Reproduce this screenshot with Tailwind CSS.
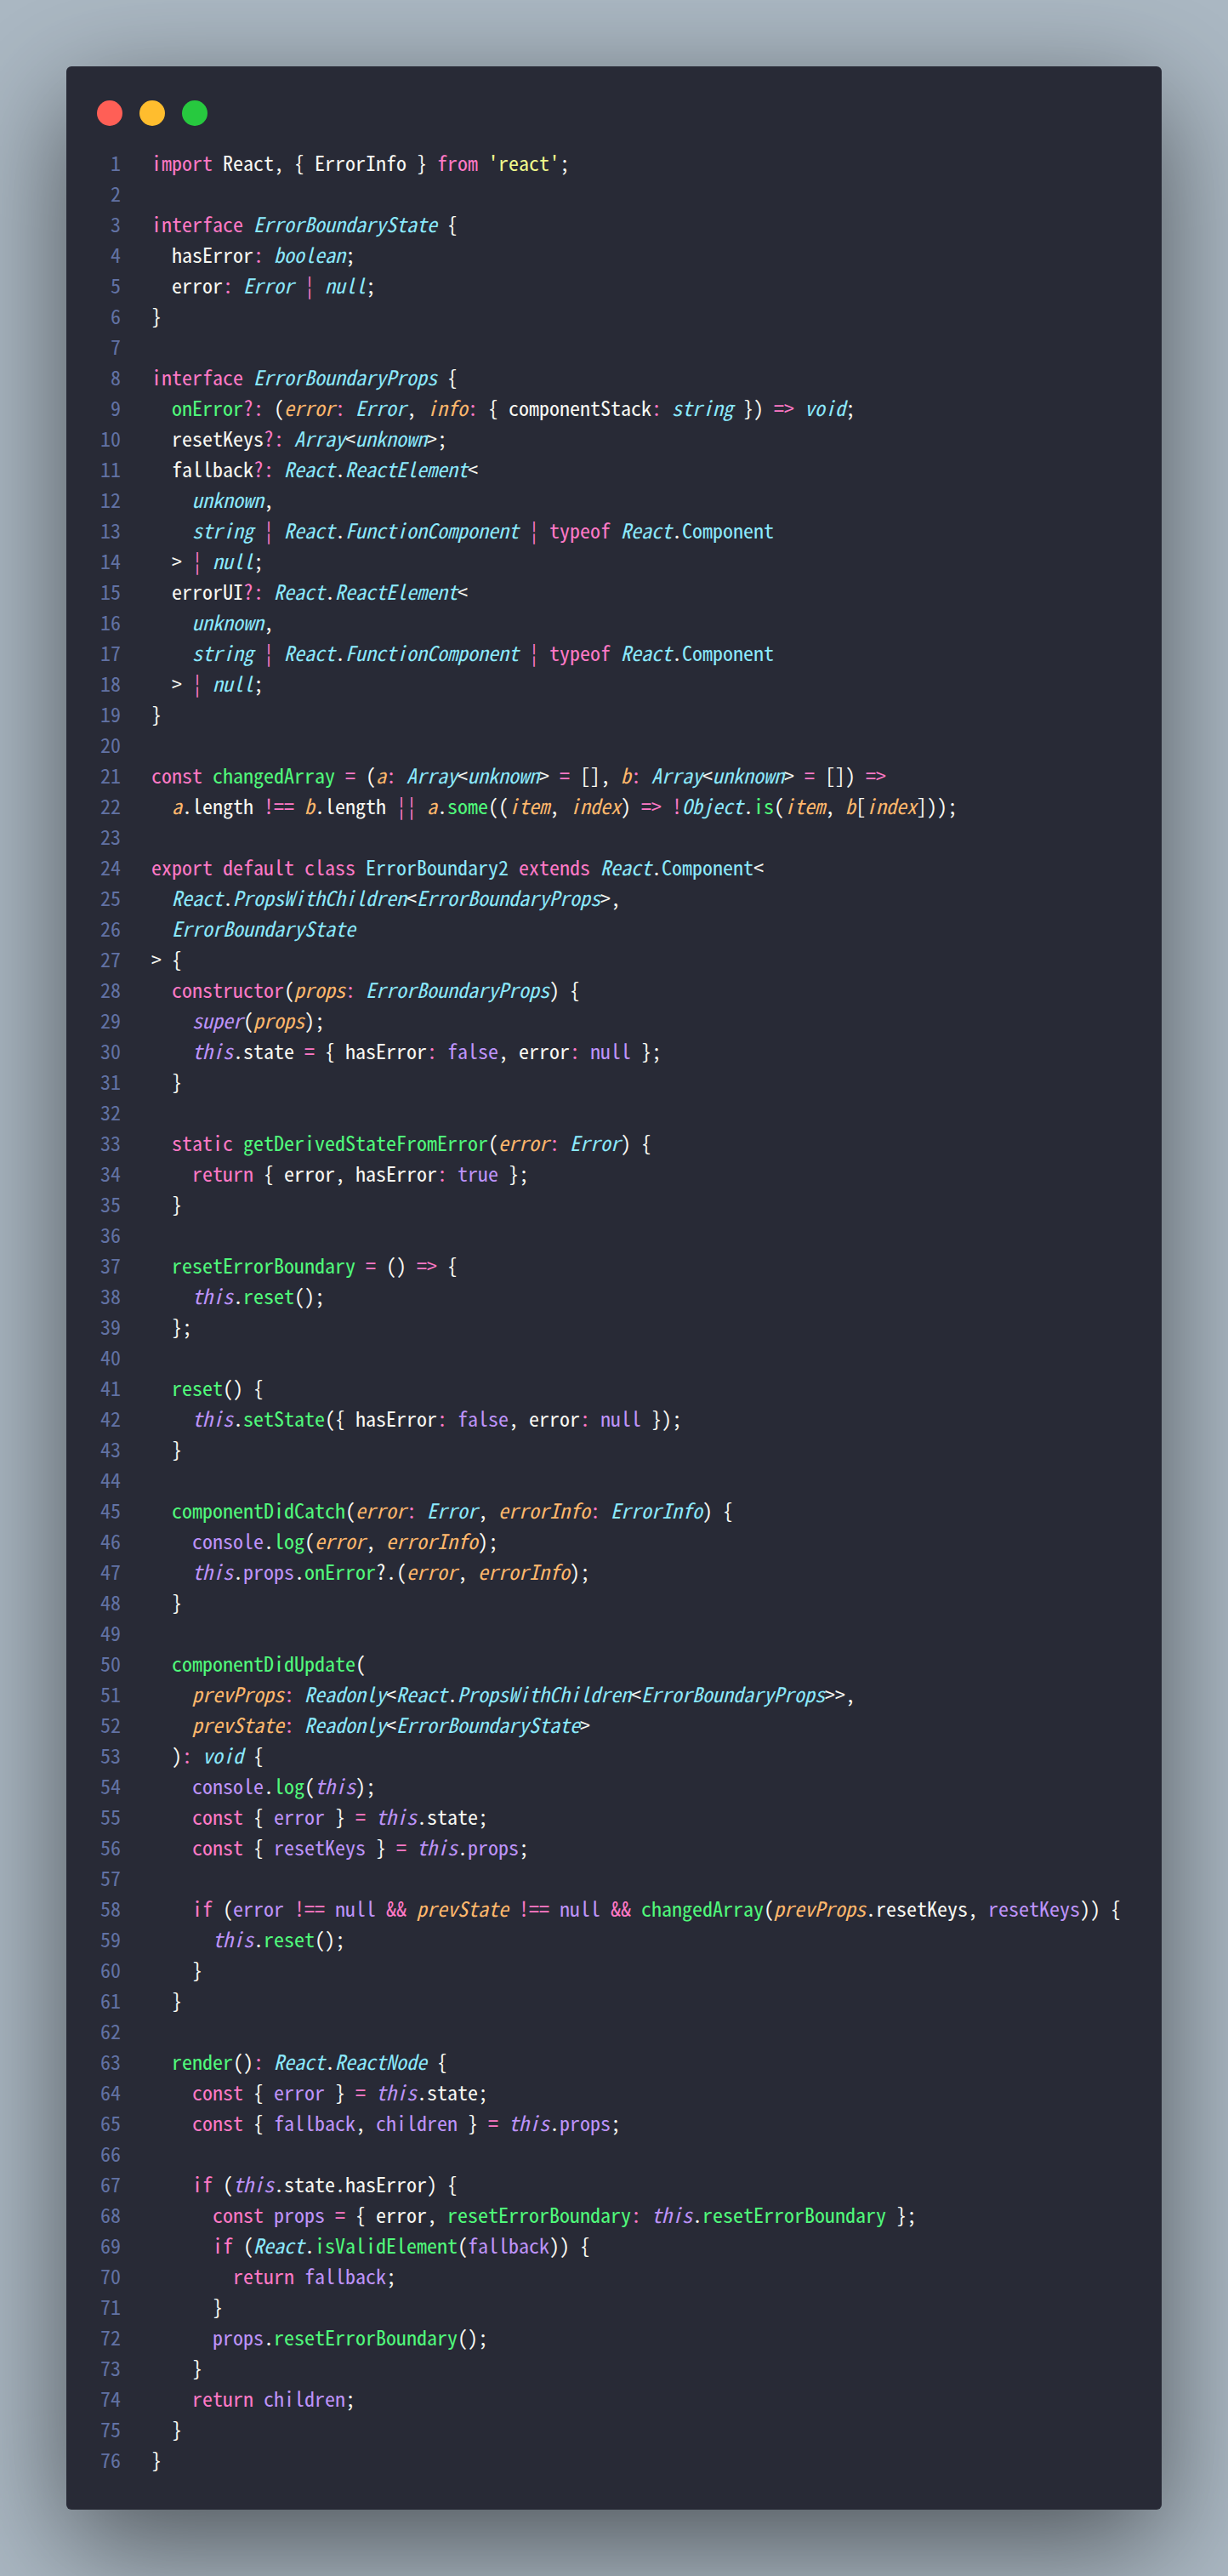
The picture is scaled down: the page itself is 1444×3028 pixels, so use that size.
<!DOCTYPE html>
<html lang="en">
<head>
<meta charset="UTF-8">
<title>ErrorBoundary2</title>
<script src="https://cdn.jsdelivr.net/npm/@tailwindcss/browser@4"></script>
</head>
<body class="bg-[#abb8c3] w-[1444px] h-[3028px] p-[78px]">
<div class="w-[1288px] h-[2872px] bg-[#282a36] rounded-md shadow-[0_40px_136px_rgba(0,0,0,0.55)] pt-10 overflow-hidden">
  <!-- window controls -->
  <div class="flex gap-5 pl-9">
    <div class="w-[30px] h-[30px] rounded-full bg-[#ff5f56]"></div>
    <div class="w-[30px] h-[30px] rounded-full bg-[#ffbd2e]"></div>
    <div class="w-[30px] h-[30px] rounded-full bg-[#27c93f]"></div>
  </div>
  <!-- code -->
  <div class="mt-[25px] font-['Noto_Sans_Mono_CJK_KR','DejaVu_Sans_Mono',monospace] text-[24px] leading-9 text-[#f8f8f2] [&>div]:flex [&>div]:h-9 [&>div>b]:font-normal [&>div>b]:w-16 [&>div>b]:mr-9 [&>div>b]:text-right [&>div>b]:text-[#6272a4] [&>div>code]:font-[inherit] [&>div>code]:whitespace-pre">
<div><b>1</b><code><span class="text-[#ff79c6]">import</span> React, { ErrorInfo } <span class="text-[#ff79c6]">from</span> <span class="text-[#f1fa8c]">'react'</span>;</code></div>
<div><b>2</b><code></code></div>
<div><b>3</b><code><span class="text-[#ff79c6]">interface</span> <span class="italic text-[#8be9fd]">ErrorBoundaryState</span> {</code></div>
<div><b>4</b><code>  hasError<span class="text-[#ff79c6]">:</span> <span class="italic text-[#8be9fd]">boolean</span>;</code></div>
<div><b>5</b><code>  error<span class="text-[#ff79c6]">:</span> <span class="italic text-[#8be9fd]">Error</span> <span class="inline-block w-3 text-center text-[#ff79c6]">¦</span> <span class="italic text-[#8be9fd]">null</span>;</code></div>
<div><b>6</b><code>}</code></div>
<div><b>7</b><code></code></div>
<div><b>8</b><code><span class="text-[#ff79c6]">interface</span> <span class="italic text-[#8be9fd]">ErrorBoundaryProps</span> {</code></div>
<div><b>9</b><code>  <span class="text-[#50fa7b]">onError</span><span class="text-[#ff79c6]">?:</span> (<span class="italic text-[#ffb86c]">error</span><span class="text-[#ff79c6]">:</span> <span class="italic text-[#8be9fd]">Error</span>, <span class="italic text-[#ffb86c]">info</span><span class="text-[#ff79c6]">:</span> { componentStack<span class="text-[#ff79c6]">:</span> <span class="italic text-[#8be9fd]">string</span> }) <span class="text-[#ff79c6]">=&gt;</span> <span class="italic text-[#8be9fd]">void</span>;</code></div>
<div><b>10</b><code>  resetKeys<span class="text-[#ff79c6]">?:</span> <span class="italic text-[#8be9fd]">Array</span>&lt;<span class="italic text-[#8be9fd]">unknown</span>&gt;;</code></div>
<div><b>11</b><code>  fallback<span class="text-[#ff79c6]">?:</span> <span class="italic text-[#8be9fd]">React</span>.<span class="italic text-[#8be9fd]">ReactElement</span>&lt;</code></div>
<div><b>12</b><code>    <span class="italic text-[#8be9fd]">unknown</span>,</code></div>
<div><b>13</b><code>    <span class="italic text-[#8be9fd]">string</span> <span class="inline-block w-3 text-center text-[#ff79c6]">¦</span> <span class="italic text-[#8be9fd]">React</span>.<span class="italic text-[#8be9fd]">FunctionComponent</span> <span class="inline-block w-3 text-center text-[#ff79c6]">¦</span> <span class="text-[#ff79c6]">typeof</span> <span class="italic text-[#8be9fd]">React</span>.<span class="text-[#8be9fd]">Component</span></code></div>
<div><b>14</b><code>  &gt; <span class="inline-block w-3 text-center text-[#ff79c6]">¦</span> <span class="italic text-[#8be9fd]">null</span>;</code></div>
<div><b>15</b><code>  errorUI<span class="text-[#ff79c6]">?:</span> <span class="italic text-[#8be9fd]">React</span>.<span class="italic text-[#8be9fd]">ReactElement</span>&lt;</code></div>
<div><b>16</b><code>    <span class="italic text-[#8be9fd]">unknown</span>,</code></div>
<div><b>17</b><code>    <span class="italic text-[#8be9fd]">string</span> <span class="inline-block w-3 text-center text-[#ff79c6]">¦</span> <span class="italic text-[#8be9fd]">React</span>.<span class="italic text-[#8be9fd]">FunctionComponent</span> <span class="inline-block w-3 text-center text-[#ff79c6]">¦</span> <span class="text-[#ff79c6]">typeof</span> <span class="italic text-[#8be9fd]">React</span>.<span class="text-[#8be9fd]">Component</span></code></div>
<div><b>18</b><code>  &gt; <span class="inline-block w-3 text-center text-[#ff79c6]">¦</span> <span class="italic text-[#8be9fd]">null</span>;</code></div>
<div><b>19</b><code>}</code></div>
<div><b>20</b><code></code></div>
<div><b>21</b><code><span class="text-[#ff79c6]">const</span> <span class="text-[#50fa7b]">changedArray</span> <span class="text-[#ff79c6]">=</span> (<span class="italic text-[#ffb86c]">a</span><span class="text-[#ff79c6]">:</span> <span class="italic text-[#8be9fd]">Array</span>&lt;<span class="italic text-[#8be9fd]">unknown</span>&gt; <span class="text-[#ff79c6]">=</span> [], <span class="italic text-[#ffb86c]">b</span><span class="text-[#ff79c6]">:</span> <span class="italic text-[#8be9fd]">Array</span>&lt;<span class="italic text-[#8be9fd]">unknown</span>&gt; <span class="text-[#ff79c6]">=</span> []) <span class="text-[#ff79c6]">=&gt;</span></code></div>
<div><b>22</b><code>  <span class="italic text-[#ffb86c]">a</span>.length <span class="text-[#ff79c6]">!==</span> <span class="italic text-[#ffb86c]">b</span>.length <span class="inline-block w-3 text-center text-[#ff79c6]">¦</span><span class="inline-block w-3 text-center text-[#ff79c6]">¦</span> <span class="italic text-[#ffb86c]">a</span>.<span class="text-[#50fa7b]">some</span>((<span class="italic text-[#ffb86c]">item</span>, <span class="italic text-[#ffb86c]">index</span>) <span class="text-[#ff79c6]">=&gt;</span> <span class="text-[#ff79c6]">!</span><span class="italic text-[#8be9fd]">Object</span>.<span class="text-[#50fa7b]">is</span>(<span class="italic text-[#ffb86c]">item</span>, <span class="italic text-[#ffb86c]">b</span>[<span class="italic text-[#ffb86c]">index</span>]));</code></div>
<div><b>23</b><code></code></div>
<div><b>24</b><code><span class="text-[#ff79c6]">export</span> <span class="text-[#ff79c6]">default</span> <span class="text-[#ff79c6]">class</span> <span class="text-[#8be9fd]">ErrorBoundary2</span> <span class="text-[#ff79c6]">extends</span> <span class="italic text-[#8be9fd]">React</span>.<span class="text-[#8be9fd]">Component</span>&lt;</code></div>
<div><b>25</b><code>  <span class="italic text-[#8be9fd]">React</span>.<span class="italic text-[#8be9fd]">PropsWithChildren</span>&lt;<span class="italic text-[#8be9fd]">ErrorBoundaryProps</span>&gt;,</code></div>
<div><b>26</b><code>  <span class="italic text-[#8be9fd]">ErrorBoundaryState</span></code></div>
<div><b>27</b><code>&gt; {</code></div>
<div><b>28</b><code>  <span class="text-[#ff79c6]">constructor</span>(<span class="italic text-[#ffb86c]">props</span><span class="text-[#ff79c6]">:</span> <span class="italic text-[#8be9fd]">ErrorBoundaryProps</span>) {</code></div>
<div><b>29</b><code>    <span class="italic text-[#bd93f9]">super</span>(<span class="italic text-[#ffb86c]">props</span>);</code></div>
<div><b>30</b><code>    <span class="italic text-[#bd93f9]">this</span>.state <span class="text-[#ff79c6]">=</span> { hasError<span class="text-[#ff79c6]">:</span> <span class="text-[#bd93f9]">false</span>, error<span class="text-[#ff79c6]">:</span> <span class="text-[#bd93f9]">null</span> };</code></div>
<div><b>31</b><code>  }</code></div>
<div><b>32</b><code></code></div>
<div><b>33</b><code>  <span class="text-[#ff79c6]">static</span> <span class="text-[#50fa7b]">getDerivedStateFromError</span>(<span class="italic text-[#ffb86c]">error</span><span class="text-[#ff79c6]">:</span> <span class="italic text-[#8be9fd]">Error</span>) {</code></div>
<div><b>34</b><code>    <span class="text-[#ff79c6]">return</span> { error, hasError<span class="text-[#ff79c6]">:</span> <span class="text-[#bd93f9]">true</span> };</code></div>
<div><b>35</b><code>  }</code></div>
<div><b>36</b><code></code></div>
<div><b>37</b><code>  <span class="text-[#50fa7b]">resetErrorBoundary</span> <span class="text-[#ff79c6]">=</span> () <span class="text-[#ff79c6]">=&gt;</span> {</code></div>
<div><b>38</b><code>    <span class="italic text-[#bd93f9]">this</span>.<span class="text-[#50fa7b]">reset</span>();</code></div>
<div><b>39</b><code>  };</code></div>
<div><b>40</b><code></code></div>
<div><b>41</b><code>  <span class="text-[#50fa7b]">reset</span>() {</code></div>
<div><b>42</b><code>    <span class="italic text-[#bd93f9]">this</span>.<span class="text-[#50fa7b]">setState</span>({ hasError<span class="text-[#ff79c6]">:</span> <span class="text-[#bd93f9]">false</span>, error<span class="text-[#ff79c6]">:</span> <span class="text-[#bd93f9]">null</span> });</code></div>
<div><b>43</b><code>  }</code></div>
<div><b>44</b><code></code></div>
<div><b>45</b><code>  <span class="text-[#50fa7b]">componentDidCatch</span>(<span class="italic text-[#ffb86c]">error</span><span class="text-[#ff79c6]">:</span> <span class="italic text-[#8be9fd]">Error</span>, <span class="italic text-[#ffb86c]">errorInfo</span><span class="text-[#ff79c6]">:</span> <span class="italic text-[#8be9fd]">ErrorInfo</span>) {</code></div>
<div><b>46</b><code>    <span class="text-[#bd93f9]">console</span>.<span class="text-[#50fa7b]">log</span>(<span class="italic text-[#ffb86c]">error</span>, <span class="italic text-[#ffb86c]">errorInfo</span>);</code></div>
<div><b>47</b><code>    <span class="italic text-[#bd93f9]">this</span>.<span class="text-[#bd93f9]">props</span>.<span class="text-[#50fa7b]">onError</span>?.(<span class="italic text-[#ffb86c]">error</span>, <span class="italic text-[#ffb86c]">errorInfo</span>);</code></div>
<div><b>48</b><code>  }</code></div>
<div><b>49</b><code></code></div>
<div><b>50</b><code>  <span class="text-[#50fa7b]">componentDidUpdate</span>(</code></div>
<div><b>51</b><code>    <span class="italic text-[#ffb86c]">prevProps</span><span class="text-[#ff79c6]">:</span> <span class="italic text-[#8be9fd]">Readonly</span>&lt;<span class="italic text-[#8be9fd]">React</span>.<span class="italic text-[#8be9fd]">PropsWithChildren</span>&lt;<span class="italic text-[#8be9fd]">ErrorBoundaryProps</span>&gt;&gt;,</code></div>
<div><b>52</b><code>    <span class="italic text-[#ffb86c]">prevState</span><span class="text-[#ff79c6]">:</span> <span class="italic text-[#8be9fd]">Readonly</span>&lt;<span class="italic text-[#8be9fd]">ErrorBoundaryState</span>&gt;</code></div>
<div><b>53</b><code>  )<span class="text-[#ff79c6]">:</span> <span class="italic text-[#8be9fd]">void</span> {</code></div>
<div><b>54</b><code>    <span class="text-[#bd93f9]">console</span>.<span class="text-[#50fa7b]">log</span>(<span class="italic text-[#bd93f9]">this</span>);</code></div>
<div><b>55</b><code>    <span class="text-[#ff79c6]">const</span> { <span class="text-[#bd93f9]">error</span> } <span class="text-[#ff79c6]">=</span> <span class="italic text-[#bd93f9]">this</span>.state;</code></div>
<div><b>56</b><code>    <span class="text-[#ff79c6]">const</span> { <span class="text-[#bd93f9]">resetKeys</span> } <span class="text-[#ff79c6]">=</span> <span class="italic text-[#bd93f9]">this</span>.<span class="text-[#bd93f9]">props</span>;</code></div>
<div><b>57</b><code></code></div>
<div><b>58</b><code>    <span class="text-[#ff79c6]">if</span> (<span class="text-[#bd93f9]">error</span> <span class="text-[#ff79c6]">!==</span> <span class="text-[#bd93f9]">null</span> <span class="text-[#ff79c6]">&amp;&amp;</span> <span class="italic text-[#ffb86c]">prevState</span> <span class="text-[#ff79c6]">!==</span> <span class="text-[#bd93f9]">null</span> <span class="text-[#ff79c6]">&amp;&amp;</span> <span class="text-[#50fa7b]">changedArray</span>(<span class="italic text-[#ffb86c]">prevProps</span>.resetKeys, <span class="text-[#bd93f9]">resetKeys</span>)) {</code></div>
<div><b>59</b><code>      <span class="italic text-[#bd93f9]">this</span>.<span class="text-[#50fa7b]">reset</span>();</code></div>
<div><b>60</b><code>    }</code></div>
<div><b>61</b><code>  }</code></div>
<div><b>62</b><code></code></div>
<div><b>63</b><code>  <span class="text-[#50fa7b]">render</span>()<span class="text-[#ff79c6]">:</span> <span class="italic text-[#8be9fd]">React</span>.<span class="italic text-[#8be9fd]">ReactNode</span> {</code></div>
<div><b>64</b><code>    <span class="text-[#ff79c6]">const</span> { <span class="text-[#bd93f9]">error</span> } <span class="text-[#ff79c6]">=</span> <span class="italic text-[#bd93f9]">this</span>.state;</code></div>
<div><b>65</b><code>    <span class="text-[#ff79c6]">const</span> { <span class="text-[#bd93f9]">fallback</span>, <span class="text-[#bd93f9]">children</span> } <span class="text-[#ff79c6]">=</span> <span class="italic text-[#bd93f9]">this</span>.<span class="text-[#bd93f9]">props</span>;</code></div>
<div><b>66</b><code></code></div>
<div><b>67</b><code>    <span class="text-[#ff79c6]">if</span> (<span class="italic text-[#bd93f9]">this</span>.state.hasError) {</code></div>
<div><b>68</b><code>      <span class="text-[#ff79c6]">const</span> <span class="text-[#bd93f9]">props</span> <span class="text-[#ff79c6]">=</span> { error, <span class="text-[#50fa7b]">resetErrorBoundary</span><span class="text-[#ff79c6]">:</span> <span class="italic text-[#bd93f9]">this</span>.<span class="text-[#50fa7b]">resetErrorBoundary</span> };</code></div>
<div><b>69</b><code>      <span class="text-[#ff79c6]">if</span> (<span class="italic text-[#8be9fd]">React</span>.<span class="text-[#50fa7b]">isValidElement</span>(<span class="text-[#bd93f9]">fallback</span>)) {</code></div>
<div><b>70</b><code>        <span class="text-[#ff79c6]">return</span> <span class="text-[#bd93f9]">fallback</span>;</code></div>
<div><b>71</b><code>      }</code></div>
<div><b>72</b><code>      <span class="text-[#bd93f9]">props</span>.<span class="text-[#50fa7b]">resetErrorBoundary</span>();</code></div>
<div><b>73</b><code>    }</code></div>
<div><b>74</b><code>    <span class="text-[#ff79c6]">return</span> <span class="text-[#bd93f9]">children</span>;</code></div>
<div><b>75</b><code>  }</code></div>
<div><b>76</b><code>}</code></div>
  </div>
</div>
</body>
</html>
